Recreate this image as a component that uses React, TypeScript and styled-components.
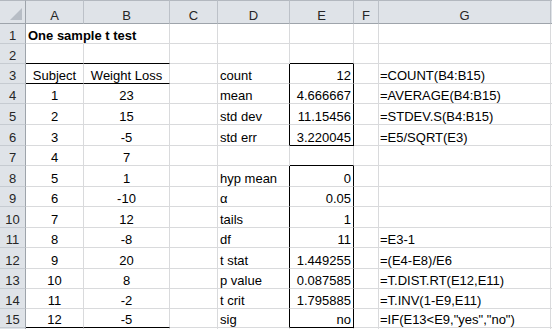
import React from 'react';
import styled, { createGlobalStyle } from 'styled-components';

const GlobalStyle = createGlobalStyle`
  html, body { margin: 0; padding: 0; background: #ffffff; overflow: hidden; }
  body { font-family: "Liberation Sans", Arial, sans-serif; }
`;

const COLS = ['A', 'B', 'C', 'D', 'E', 'F', 'G', 'H'];
const ROW_HEIGHTS = [20, 20, 20, 20, 21, 21, 20, 21, 20, 21, 20, 21, 20, 20, 19, 20];
const VISIBLE_LABELS = 15;

const GRID = '#d9dadc';
const BLACK = '#000000';
const HEAD_BG = '#dfe3e8';
const HEAD_LINE = '#9ea4ab';
const HEAD_SEP = '#bcc1c8';

type Align = 'left' | 'center' | 'right';
type Edge = 'grid' | 'black' | 'none';

const Sheet = styled.div`
  display: grid;
  grid-template-columns: 26px 58px 86px 48px 72px 64px 25px 172px 1fr;
  grid-template-rows: 24px ${ROW_HEIGHTS.map((h) => `${h}px`).join(' ')};
  width: 552px;
  height: 329px;
  overflow: hidden;
  background: #ffffff;
  font-size: 13px;
  line-height: 15px;
  color: #000;
`;

const Corner = styled.div`
  position: relative;
  box-sizing: border-box;
  background: ${HEAD_BG};
  border-top: 1px solid #b3b8bf;
  border-right: 1px solid ${HEAD_LINE};
  border-bottom: 1px solid ${HEAD_LINE};
  &::after {
    content: '';
    position: absolute;
    right: 3px;
    bottom: 3px;
    width: 0;
    height: 0;
    border-left: 12px solid transparent;
    border-bottom: 12px solid #b7bdc5;
  }
`;

const ColHeader = styled.div<{ $last?: boolean }>`
  box-sizing: border-box;
  display: flex;
  align-items: flex-end;
  justify-content: center;
  background: ${HEAD_BG};
  border-top: 1px solid #b3b8bf;
  border-right: ${(p) => (p.$last ? 'none' : `1px solid ${HEAD_SEP}`)};
  border-bottom: 1px solid ${HEAD_LINE};
  color: #262626;
`;

const RowHeader = styled.div`
  box-sizing: border-box;
  display: flex;
  align-items: flex-end;
  justify-content: center;
  background: ${HEAD_BG};
  border-right: 1px solid ${HEAD_LINE};
  border-bottom: 1px solid #c6cbd1;
  color: #262626;
`;

const Cell = styled.div<{ $align: Align; $bold?: boolean; $right: Edge; $bottom: Edge }>`
  box-sizing: border-box;
  display: flex;
  align-items: flex-end;
  justify-content: ${(p) =>
    p.$align === 'left' ? 'flex-start' : p.$align === 'right' ? 'flex-end' : 'center'};
  padding: ${(p) => (p.$align === 'left' ? '0 0 0 2px' : p.$align === 'right' ? '0 2px 0 0' : '0')};
  white-space: nowrap;
  overflow: visible;
  font-weight: ${(p) => (p.$bold ? 700 : 400)};
  border-right: 1px solid
    ${(p) => (p.$right === 'black' ? BLACK : p.$right === 'none' ? 'transparent' : GRID)};
  border-bottom: 1px solid ${(p) => (p.$bottom === 'black' ? BLACK : GRID)};
`;

const FormulaCell = styled(Cell)`
  padding-left: 1px;
`;

type CellData = { v: string; align?: Align; bold?: boolean };

const data: Record<string, CellData> = {
  A1: { v: 'One sample t test', align: 'left', bold: true },
  A3: { v: 'Subject', align: 'center' },
  B3: { v: 'Weight Loss', align: 'center' },
};

const losses = [23, 15, -5, 7, 1, -10, 12, -8, 20, 8, -2, -5];
losses.forEach((w, i) => {
  data[`A${i + 4}`] = { v: String(i + 1), align: 'center' };
  data[`B${i + 4}`] = { v: String(w), align: 'center' };
});

const stats: [number, string, string, string?][] = [
  [3, 'count', '12', '=COUNT(B4:B15)'],
  [4, 'mean', '4.666667', '=AVERAGE(B4:B15)'],
  [5, 'std dev', '11.15456', '=STDEV.S(B4:B15)'],
  [6, 'std err', '3.220045', '=E5/SQRT(E3)'],
  [8, 'hyp mean', '0'],
  [9, 'α', '0.05'],
  [10, 'tails', '1'],
  [11, 'df', '11', '=E3-1'],
  [12, 't stat', '1.449255', '=(E4-E8)/E6'],
  [13, 'p value', '0.087585', '=T.DIST.RT(E12,E11)'],
  [14, 't crit', '1.795885', '=T.INV(1-E9,E11)'],
  [15, 'sig', 'no', '=IF(E13<E9,"yes","no")'],
];
stats.forEach(([r, label, value, formula]) => {
  data[`D${r}`] = { v: label, align: 'left' };
  data[`E${r}`] = { v: value, align: 'right' };
  if (formula) data[`G${r}`] = { v: formula, align: 'left' };
});

const blackBottom = new Set(['A2', 'B2', 'A3', 'B3', 'A15', 'B15', 'E2', 'E6', 'E7', 'E15']);
const blackRight = new Set<string>();
[3, 4, 5, 6, 8, 9, 10, 11, 12, 13, 14, 15].forEach((r) => {
  blackRight.add(`D${r}`);
  blackRight.add(`E${r}`);
});
const noRight = new Set(['A1']);

export default function App() {
  const rows = ROW_HEIGHTS.map((_, i) => i + 1);
  return (
    <>
      <GlobalStyle />
      <Sheet>
        <Corner />
        {COLS.map((c) => (
          <ColHeader key={c} $last={c === 'H'}>
            {c === 'H' ? '' : c}
          </ColHeader>
        ))}
        {rows.map((r) => (
          <React.Fragment key={r}>
            <RowHeader>{r <= VISIBLE_LABELS ? r : ''}</RowHeader>
            {COLS.map((c) => {
              const id = `${c}${r}`;
              const d = data[id];
              const right: Edge = blackRight.has(id) ? 'black' : noRight.has(id) ? 'none' : 'grid';
              const bottom: Edge = blackBottom.has(id) ? 'black' : 'grid';
              const Comp = c === 'G' ? FormulaCell : Cell;
              return (
                <Comp
                  key={id}
                  $align={d?.align ?? 'left'}
                  $bold={d?.bold}
                  $right={right}
                  $bottom={bottom}
                >
                  {d?.v ?? ''}
                </Comp>
              );
            })}
          </React.Fragment>
        ))}
      </Sheet>
    </>
  );
}
